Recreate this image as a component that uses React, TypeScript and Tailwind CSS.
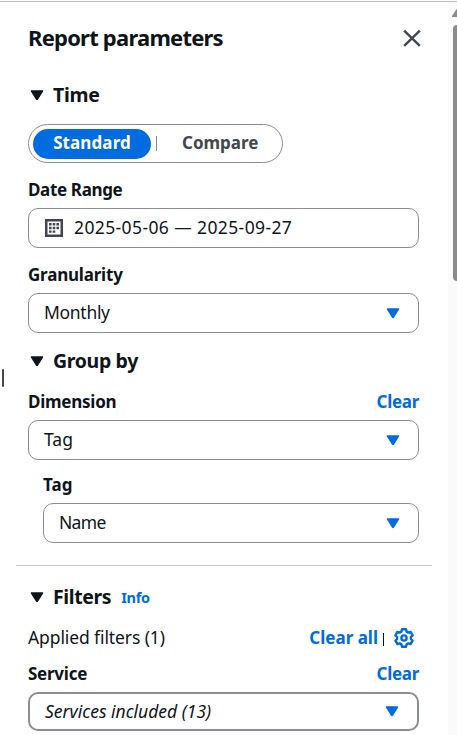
import React from "react";

function Triangle({ className = "" }: { className?: string }) {
  return (
    <svg className={`overflow-visible ${className}`} width="12" height="11" viewBox="0 0 12 11" fill="currentColor">
      <path d="M0.6 0.3h10.8c0.8 0 1.1 0.7 0.7 1.3L6.9 9.7c-0.4 0.6-1.4 0.6-1.8 0L-0.1 1.6C-0.5 1-0.2 0.3 0.6 0.3z" />
    </svg>
  );
}

function SectionTitle({ children, className = "" }: { children: React.ReactNode; className?: string }) {
  return (
    <div className="flex h-7 items-center pl-[3px]">
      <Triangle className="shrink-0" />
      <h3 className={`ml-[10px] text-[19.5px] font-bold leading-7 whitespace-nowrap ${className}`}>{children}</h3>
    </div>
  );
}

function Label({ children, className = "" }: { children: React.ReactNode; className?: string }) {
  return <span className={`text-[17px] font-bold leading-6 whitespace-nowrap ${className}`}>{children}</span>;
}

function ClearLink() {
  return <a className="text-[17px] font-bold leading-6 tracking-[-0.3px] text-[#006ce0]">Clear</a>;
}

function SelectBox({ children, className = "" }: { children: React.ReactNode; className?: string }) {
  return (
    <button className={`flex h-10 w-full items-center justify-between rounded-[10px] border border-[#8c8c94] pr-[19px] pl-[15px] text-[17.5px] ${className}`}>
      <span className="-mt-px whitespace-nowrap">{children}</span>
      <Triangle className="text-[#006ce0]" />
    </button>
  );
}

export default function App() {
  return (
    <div className="relative flex h-[735px] w-[457px] overflow-hidden bg-white font-['Noto_Sans','Open_Sans',sans-serif] text-[#0f141a]">
      <div className="absolute top-px left-0 z-10 h-px w-full bg-[#bdbdc2]" />
      <div className="absolute top-[369px] left-[2px] h-[18px] w-[2px] rounded-[1px] bg-[#424650]" />

      <main className="flex w-[448px] flex-col pr-[29px] pl-7">
        <header className="mt-[22px] flex h-8 items-center justify-between">
          <h2 className="-mt-[2px] text-[22px] font-bold leading-8 tracking-[-0.78px] whitespace-nowrap">Report parameters</h2>
          <svg className="-mr-[2px]" width="18" height="18" viewBox="0 0 18 18" stroke="#424650" strokeWidth="2.4" strokeLinecap="butt">
            <path d="M1.2 1.6l15.6 15.2M16.8 1.6L1.2 16.8" />
          </svg>
        </header>

        <div className="mt-[27px]">
          <SectionTitle className="tracking-[-0.3px]">Time</SectionTitle>
        </div>
        <div className="mt-[15px] flex h-[39px] w-[255px] items-center rounded-full border border-[#8c8c94] pl-1">
          <button className="h-[30px] w-[118px] rounded-full bg-[#006ce0] pb-[2px] text-center text-[17px] font-bold tracking-[0.1px] text-white">Standard</button>
          <span className="ml-[5px] h-[15px] w-px bg-[#8c8c94]" />
          <button className="ml-[25px] pb-[2px] text-[17px] font-bold text-[#424650]">Compare</button>
        </div>

        <Label className="mt-[15px] tracking-[-0.35px]">Date Range</Label>
        <div className="mt-[6px] flex h-10 shrink-0 items-center rounded-[10px] border border-[#8c8c94] pl-4 text-[17.5px]">
          <svg width="18" height="18" viewBox="0 0 18 18" fill="#424650">
            <path fillRule="evenodd" d="M0 0h18v18H0zM2.5 2.5v13h13v-13z" />
            <path d="M4 4h2.6v2.6H4zM7.7 4h2.6v2.6H7.700zM11.400 4h2.600v2.600h-2.600zM4 7.700h2.600v2.600H4zM7.700 7.700h2.600v2.600H7.700zM11.400 7.700h2.600v2.600h-2.600zM4 11.400h2.600v2.400H4zM7.700 11.400h2.600v2.400H7.700z" />
          </svg>
          <span className="-mt-[2px] ml-[11px] tracking-[0.39px] whitespace-nowrap">2025-05-06 — 2025-09-27</span>
        </div>

        <Label className="mt-[15px] tracking-[-0.2px]">Granularity</Label>
        <SelectBox className="mt-[6px] shrink-0 tracking-[-0.3px]">Monthly</SelectBox>

        <div className="mt-[14px]">
          <SectionTitle className="tracking-[-0.35px]">Group by</SectionTitle>
        </div>
        <div className="mt-[15px] flex justify-between">
          <Label className="tracking-[-0.25px]">Dimension</Label>
          <ClearLink />
        </div>
        <SelectBox className="mt-[6px] shrink-0">Tag</SelectBox>
        <div className="mt-[13px] flex flex-col pl-[15px]">
          <Label>Tag</Label>
          <SelectBox className="mt-[6px] shrink-0 tracking-[-0.7px]">Name</SelectBox>
        </div>

        <hr className="mt-[22px] -mr-[13px] -ml-3 border-t border-[#c6c6cd]" />

        <div className="mt-[17px] flex items-center">
          <SectionTitle className="tracking-[-0.4px]">Filters</SectionTitle>
          <a className="ml-[10px] text-[14.5px] font-bold leading-7 tracking-[-0.3px] text-[#006ce0]">Info</a>
        </div>
        <div className="mt-[15px] flex h-6 items-center justify-between">
          <span className="-mt-px text-[17.5px] tracking-[-0.1px] whitespace-nowrap">Applied filters (1)</span>
          <div className="flex items-center pr-[5px]">
            <a className="text-[17px] font-bold text-[#006ce0]">Clear all</a>
            <span className="mt-[3px] ml-[5px] h-[13px] w-px bg-[#0f141a]" />
            <svg className="ml-[10px]" width="20" height="20" viewBox="0 0 20 20" fill="none" stroke="#006ce0" strokeWidth="2.4" strokeLinejoin="round">
              <path d="M8 1.300h4l.6 2.300 1.700 1 2.300-.7 2 3.400-1.700 1.700v2l1.700 1.700-2 3.400-2.300-.7-1.700 1-.6 2.300H8l-.6-2.300-1.700-1-2.300.7-2-3.400L3.100 11V9L1.400 7.300l2-3.400 2.300.7 1.700-1z" />
              <circle cx="10" cy="10" r="2.600" />
            </svg>
          </div>
        </div>
        <div className="mt-3 flex justify-between">
          <Label className="tracking-[-0.25px]">Service</Label>
          <ClearLink />
        </div>
        <SelectBox className="mt-[6px] !h-[39px] shrink-0 border-2 italic">Services included (13)</SelectBox>
      </main>

      <aside className="flex w-[9px] shrink-0 flex-col items-end overflow-hidden bg-[#fafafa] pt-[9px]">
        <svg className="shrink-0" width="5" height="8" viewBox="0 0 5 8" fill="#8b8b8b">
          <path d="M5 0v8H0.800Q-0.500 8 0.200 6.800L4.300 0.500z" />
        </svg>
        <div className="mt-2 h-[256px] w-1 shrink-0 rounded-l-[4px] bg-[#8b8b8b]" />
      </aside>
    </div>
  );
}
